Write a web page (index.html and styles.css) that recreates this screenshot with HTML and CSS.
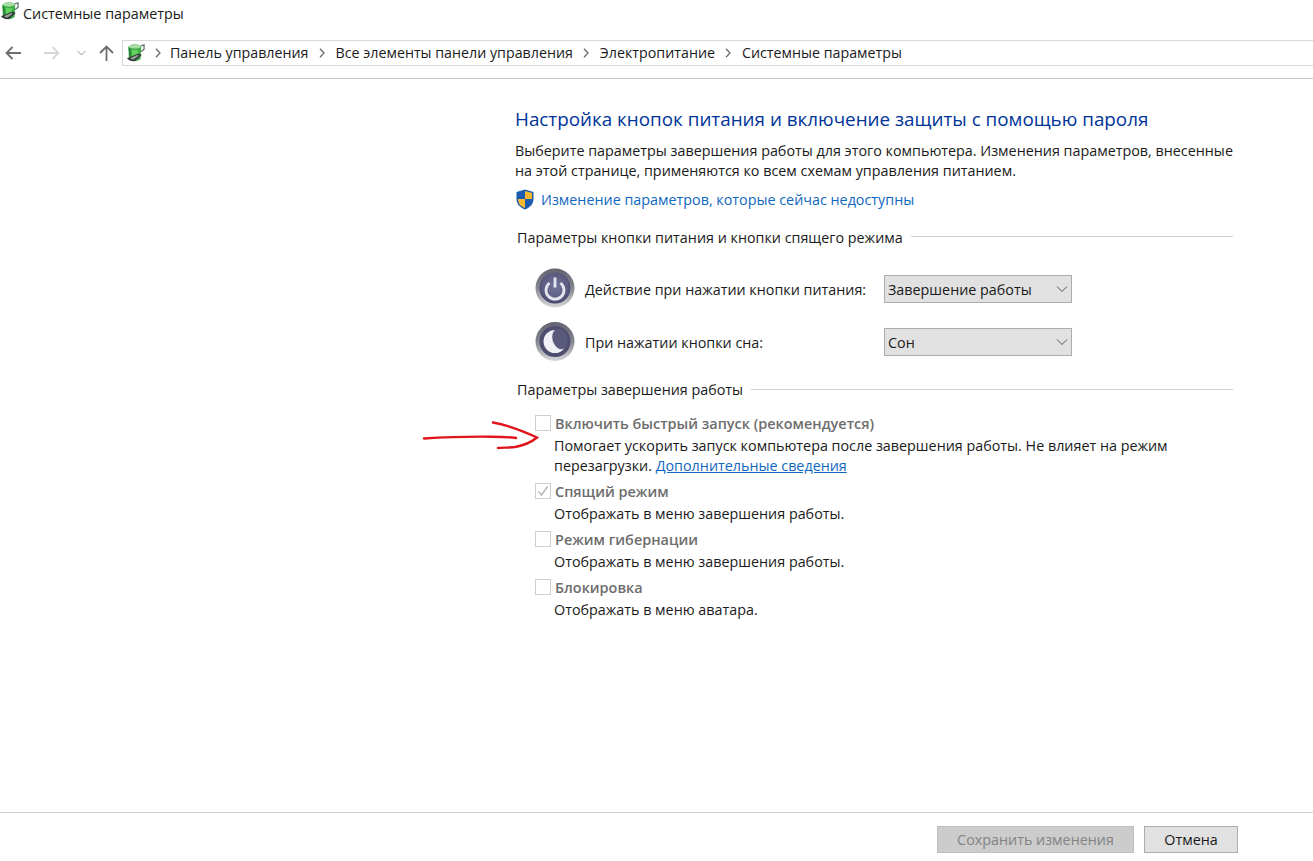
FILE: index.html
```html
<!DOCTYPE html>
<html lang="ru">
<head>
<meta charset="utf-8">
<title>Системные параметры</title>
<link rel="stylesheet" href="styles.css">
</head>
<body>
<svg width="0" height="0" class="defs">
  <defs>
    <symbol id="battery" viewBox="0 0 20 22">
      <path d="M2.500 4.500c3-3.500 11-3.500 13.500 0l-.5 12.500c-3 3.500-10 3.500-12.500 0z" fill="#3fae4a"/>
      <path d="M2.500 4.500c3-3.500 11-3.500 13.500 0-3 2.500-10.500 2.500-13.500 0z" fill="#a9dca4"/>
      <path d="M6 7.800l7 .2-.5 7-6 .5z" fill="#5fd35a"/>
      <path d="M2.500 5L4 15l1.500 1L4.500 6.500z" fill="#1f7a30"/>
      <path d="M15.500 3.500l3.500-1v4.500l-3 2.500" fill="none" stroke="#5f6f66" stroke-width="1.300"/>
      <path d="M1 16.500l12-5 3.500 1.500-7 6.500c-3 .6-6.500-.5-8.500-3z" fill="#33383a"/>
      <path d="M4 16.500l8-3.400 1.500.8-6 4.100z" fill="#9aa39a"/>
    </symbol>
    <symbol id="chev" viewBox="0 0 12 8">
      <path d="M1 1.500l5 5 5-5" fill="none" stroke="currentColor" stroke-width="1"/>
    </symbol>
    <symbol id="crumb" viewBox="0 0 6 10">
      <path d="M1 .8l4 4.200-4 4.200" fill="none" stroke="currentColor" stroke-width="1.300"/>
    </symbol>
    <radialGradient id="orb" cx="50%" cy="45%" r="55%">
      <stop offset="0" stop-color="#74759a"/>
      <stop offset=".75" stop-color="#5b5c80"/>
      <stop offset="1" stop-color="#44466a"/>
    </radialGradient>
    <linearGradient id="rim" x1="0" y1="0" x2="0" y2="1">
      <stop offset="0" stop-color="#62636f"/>
      <stop offset=".5" stop-color="#85868f"/>
      <stop offset="1" stop-color="#d8d8dc"/>
    </linearGradient>
  </defs>
</svg>

<header class="titlebar">
  <svg class="title-icon" width="19" height="22"><use href="#battery"/></svg>
  <span class="title-text">Системные параметры</span>
</header>

<nav class="navbar">
  <svg class="nav-btn back" width="16" height="14" viewBox="0 0 16 14"><path d="M16 7H1.500M7.500 1l-6 6 6 6" fill="none" stroke="currentColor" stroke-width="1.800"/></svg>
  <svg class="nav-btn forward" width="16" height="14" viewBox="0 0 16 14"><path d="M0 7h14.500M8.500 1l6 6-6 6" fill="none" stroke="currentColor" stroke-width="1.800"/></svg>
  <svg class="nav-btn recent" width="9" height="6"><use href="#chev"/></svg>
  <svg class="nav-btn up" width="15" height="16" viewBox="0 0 15 16"><path d="M7.500 16V1.500M1 8l6.500-6.500L14 8" fill="none" stroke="currentColor" stroke-width="1.800"/></svg>
  <div class="address">
    <svg class="addr-icon" width="19" height="22"><use href="#battery"/></svg>
    <svg class="crumb first" width="6" height="10"><use href="#crumb"/></svg>
    <span>Панель управления</span>
    <svg class="crumb" width="6" height="10"><use href="#crumb"/></svg>
    <span>Все элементы панели управления</span>
    <svg class="crumb" width="6" height="10"><use href="#crumb"/></svg>
    <span>Электропитание</span>
    <svg class="crumb" width="6" height="10"><use href="#crumb"/></svg>
    <span>Системные параметры</span>
  </div>
</nav>

<main class="content">
  <h1 class="heading">Настройка кнопок питания и включение защиты с помощью пароля</h1>
  <p class="intro">Выберите параметры завершения работы для этого компьютера. Изменения параметров, внесенные на этой странице, применяются ко всем схемам управления питанием.</p>
  <div class="uac">
    <svg width="20" height="21" viewBox="0 0 20 21">
      <path d="M10 .5l8.500 2.500V10c0 5-3.500 8.500-8.500 10.500C5 18.500 1.500 15 1.500 10V3z" fill="#1c5cb0"/>
      <path d="M10 2l7 2v6h-7zM10 10v9c-4-1.500-7-4.500-7-9z" fill="#f4b92e"/>
    </svg>
    <a class="link" href="#">Изменение параметров, которые сейчас недоступны</a>
  </div>

  <div class="group-title first-group"><span>Параметры кнопки питания и кнопки спящего режима</span></div>

  <div class="power-row">
    <svg class="orb" width="40" height="42" viewBox="0 0 40 42">
      <circle cx="20" cy="20" r="19.500" fill="url(#rim)"/>
      <circle cx="20" cy="20" r="15.500" fill="url(#orb)"/>
      <path d="M14.500 15a9 9 0 1 0 11 0" fill="none" stroke="#e6e6f2" stroke-width="2.800"/>
      <path d="M20 9.500v10" stroke="#e6e6f2" stroke-width="2.800"/>
    </svg>
    <span class="power-label">Действие при нажатии кнопки питания:</span>
    <div class="select"><span>Завершение работы</span><svg width="12" height="8"><use href="#chev"/></svg></div>
  </div>
  <div class="power-row second">
    <svg class="orb" width="40" height="42" viewBox="0 0 40 42">
      <circle cx="20" cy="20.500" r="19.500" fill="url(#rim)"/>
      <circle cx="20" cy="20.500" r="15.500" fill="#4d4e70"/>
      <circle cx="20" cy="20.500" r="11.500" fill="#f0f0f6"/>
      <ellipse cx="25" cy="18" rx="7.500" ry="10.500" transform="rotate(-18 25 18)" fill="#5a5b7c"/>
    </svg>
    <span class="power-label">При нажатии кнопки сна:</span>
    <div class="select"><span>Сон</span><svg width="12" height="8"><use href="#chev"/></svg></div>
  </div>

  <div class="group-title second-group"><span>Параметры завершения работы</span></div>

  <section class="option fast">
    <div class="opt-head"><span class="check"></span><strong>Включить быстрый запуск (рекомендуется)</strong></div>
    <p class="opt-desc">Помогает ускорить запуск компьютера после завершения работы. Не влияет на режим перезагрузки. <a class="link underlined" href="#">Дополнительные сведения</a></p>
  </section>
  <section class="option">
    <div class="opt-head"><span class="check"><svg width="14" height="14" viewBox="0 0 14 14"><path d="M2.500 7.500l3 3.500 6-8.500" fill="none" stroke="#b5b5b5" stroke-width="1.400"/></svg></span><strong>Спящий режим</strong></div>
    <p class="opt-desc">Отображать в меню завершения работы.</p>
  </section>
  <section class="option">
    <div class="opt-head"><span class="check"></span><strong>Режим гибернации</strong></div>
    <p class="opt-desc">Отображать в меню завершения работы.</p>
  </section>
  <section class="option">
    <div class="opt-head"><span class="check"></span><strong>Блокировка</strong></div>
    <p class="opt-desc">Отображать в меню аватара.</p>
  </section>
</main>

<footer class="footer">
  <button class="btn save" type="button">Сохранить изменения</button>
  <button class="btn cancel" type="button">Отмена</button>
</footer>

<svg class="annotation" width="125" height="32" viewBox="0 0 125 32">
  <path d="M2 18.500c22-1.500 48-2 68-1.800 9 .1 18 .5 24 1.300" fill="none" stroke="#e0141c" stroke-width="2.400" stroke-linecap="round"/>
  <path d="M71 2.500c16 3 31 9 44 15-6 5-14 8-22 9.500-5 .7-13 .6-17 1" fill="none" stroke="#e0141c" stroke-width="2.400" stroke-linecap="round"/>
</svg>
</body>
</html>
```

FILE: styles.css
```css
* { box-sizing: border-box; }
html, body { height: 100%; }
body {
  margin: 0;
  height: 861px;
  overflow: hidden;
  background: #fff;
  color: #1a1a1a;
  font-family: "Open Sans", "Noto Sans", sans-serif;
  font-size: 14.33px;
  display: flex;
  flex-direction: column;
  position: relative;
}
.defs { position: absolute; }
p { margin: 0; }

.titlebar {
  height: 32px;
  padding: 2px 0 0 3px;
  display: flex;
  align-items: flex-start;
  flex: none;
}
.title-icon { margin: -2px 0 0 -3px; }
.title-text { font-size: 14.33px; line-height: 24px; margin-left: 4px; }

.navbar {
  height: 47px;
  flex: none;
  display: flex;
  align-items: center;
  border-bottom: 1px solid #c8c8c8;
  padding: 8px 0 13px;
}
.nav-btn { flex: none; }
.back { color: #6d6d6d; margin-left: 5px; }
.forward { color: #d6d6d6; margin-left: 23px; }
.recent { color: #6d6d6d; margin-left: 17px; }
.up { color: #6d6d6d; margin-left: 13px; margin-right: 8px; }
.address {
  flex: 1;
  height: 26px;
  border: 1px solid #d9d9d9;
  border-right: 0;
  display: flex;
  align-items: center;
  font-size: 14.25px;
}
.addr-icon { margin-left: 3px; flex: none; }
.crumb { color: #6d6d6d; flex: none; margin: 0 11px 0 10px; }
.crumb.first { margin-left: 10px; margin-right: 9px; }

.content {
  flex: 1;
  padding: 27px 80px 0 515px;
}
.heading {
  margin: 0;
  font-size: 18.83px;
  line-height: 26px;
  font-weight: 400;
  color: #003399;
}
.intro {
  margin-top: 9px;
  line-height: 20px;
}
.uac {
  margin-top: 7px;
  display: flex;
  align-items: center;
  gap: 6px;
  height: 22px;
}
.link { color: #1067c0; text-decoration: none; }
.underlined { text-decoration: underline; }

.group-title {
  display: flex;
  align-items: center;
  gap: 8px;
  padding-left: 2px;
  line-height: 20px;
}
.group-title::after {
  content: "";
  flex: 1;
  height: 1px;
  background: #d0d0d0;
}
.first-group { margin-top: 18px; }
.first-group::after { margin-bottom: 4px; }
.second-group { margin-top: 17px; }
.second-group::after { margin-bottom: 2px; }

.power-row {
  display: flex;
  align-items: center;
  margin-top: 20px;
  padding-left: 20px;
  height: 42px;
}
.power-row.second { margin-top: 11px; }
.power-label { margin-left: 10px; width: 299px; flex: none; }
.orb { flex: none; }
.select {
  width: 188px;
  height: 28px;
  background: #e1e1e1;
  border: 1px solid #adadad;
  display: flex;
  align-items: center;
  justify-content: space-between;
  padding: 0 3px;
}
.select svg { color: #555; }

.option { margin-left: 20px; margin-top: 5px; }
.option.fast { margin-top: 13px; }
.opt-head {
  display: flex;
  align-items: center;
  height: 20px;
}
.check {
  width: 16px;
  height: 16px;
  border: 1px solid #cfcfcf;
  display: flex;
  align-items: center;
  justify-content: center;
  flex: none;
  margin-right: 4px;
}
.opt-head strong { color: #6d6d6d; font-weight: 600; font-size: 14.45px; }
.opt-desc { margin: 3px 0 0 19px; line-height: 20px; }

.footer {
  flex: none;
  height: 49px;
  border-top: 1px solid #d0d0d0;
  display: flex;
  justify-content: flex-end;
  align-items: flex-start;
  gap: 10px;
  padding: 13px 75px 0 0;
}
.btn {
  height: 27px;
  font: inherit;
  border: 1px solid #adadad;
  background: #e1e1e1;
  color: #1a1a1a;
  padding: 0;
}
.save { width: 197px; background: #cccccc; border-color: #bfbfbf; color: #838383; }
.cancel { width: 94px; }

.annotation {
  position: absolute;
  left: 422px;
  top: 420px;
}
```
